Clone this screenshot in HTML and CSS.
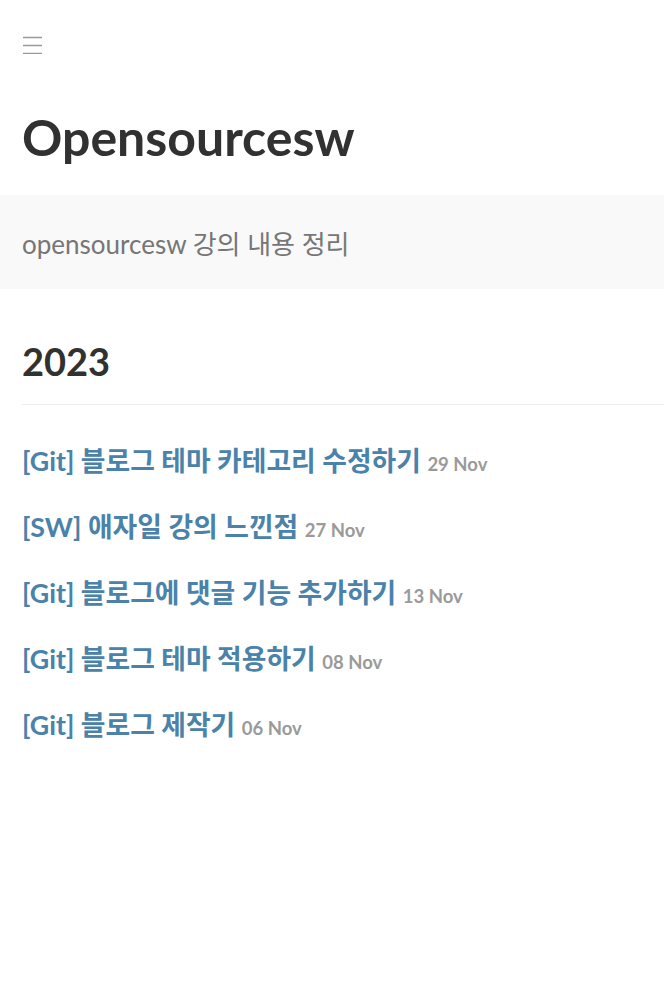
FILE: index.html
```html
<!DOCTYPE html>
<html lang="ko">
<head>
<meta charset="utf-8">
<title>Opensourcesw</title>
<link rel="stylesheet" href="styles.css">
</head>
<body>
<header class="masthead">
  <button class="menu-toggle" aria-label="menu">
    <svg width="20" height="18" viewBox="0 0 20 18"><path d="M0 1.5H19M0 9.5H19M0 17.5H19" stroke="#999" stroke-width="1.5" fill="none"/></svg>
  </button>
  <h1 class="site-title">Opensourcesw</h1>
</header>
<div class="lead-band">
  <p class="lead">opensourcesw 강의 내용 정리</p>
</div>
<main class="content">
  <h2 class="year">2023</h2>
  <ul class="posts">
    <li><a href="#">[Git] 블로그 테마 카테고리 수정하기</a> <span class="date">29 Nov</span></li>
    <li><a href="#">[SW] 애자일 강의 느낀점</a> <span class="date">27 Nov</span></li>
    <li><a href="#">[Git] 블로그에 댓글 기능 추가하기</a> <span class="date">13 Nov</span></li>
    <li><a href="#">[Git] 블로그 테마 적용하기</a> <span class="date">08 Nov</span></li>
    <li><a href="#">[Git] 블로그 제작기</a> <span class="date">06 Nov</span></li>
  </ul>
</main>
</body>
</html>
```
FILE: styles.css
```css
html, body {
  margin: 0;
  padding: 0;
  background: #fff;
  color: #313131;
  font-family: Lato, "Noto Sans CJK KR", sans-serif;
}
.masthead {
  padding: 36px 22px 0;
}
.menu-toggle {
  display: block;
  border: 0;
  background: none;
  padding: 0;
  margin: 0 0 0 1px;
  height: 18px;
  cursor: pointer;
}
.menu-toggle svg { display: block; }
.site-title {
  margin: 53px 0 0;
  font-size: 50px;
  font-weight: 700;
  line-height: 1.2;
  color: #313131;
  padding-bottom: 28px;
}
.lead-band {
  background: #f9f9f9;
  padding: 0 22px;
  height: 94px;
  display: flex;
  align-items: center;
}
.lead {
  margin: 0;
  font-size: 26px;
  font-weight: 400;
  color: #767676;
}
.content {
  padding-left: 22px;
}
.year {
  margin: 50px 0 0;
  font-size: 38px;
  font-weight: 700;
  line-height: 1.2;
  padding-bottom: 19px;
  border-bottom: 1px solid #eee;
}
.posts {
  list-style: none;
  margin: 23px 0 0;
  padding: 0;
}
.posts li {
  line-height: 66px;
  height: 66px;
  font-size: 26.8px;
  font-weight: 700;
}
.posts a {
  color: #4a82aa;
  text-decoration: none;
}
.date {
  font-size: 18.5px;
  color: #9a9a9a;
  font-weight: 700;
}
```
